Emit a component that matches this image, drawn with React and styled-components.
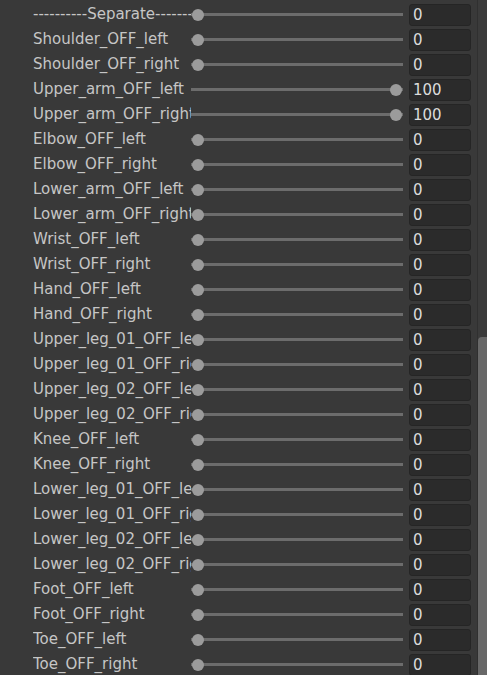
import React from 'react';
import styled, { createGlobalStyle } from 'styled-components';

const GlobalStyle = createGlobalStyle`
  html, body {
    margin: 0;
    padding: 0;
    background: #393939;
    overflow: hidden;
  }
`;

const Panel = styled.div`
  display: flex;
  width: 487px;
  height: 675px;
  overflow: hidden;
  background: #393939;
  font-family: "DejaVu Sans", Verdana, sans-serif;
`;

const List = styled.div`
  flex: 1;
  display: flex;
  flex-direction: column;
  padding-top: 2px;
  padding-right: 6px;
`;

const Row = styled.div`
  display: flex;
  align-items: center;
  height: 25px;
  flex-shrink: 0;
  padding-left: 33px;
`;

const Label = styled.div`
  width: 158px;
  flex-shrink: 0;
  overflow: hidden;
  white-space: nowrap;
  color: #c6c6c6;
  font-size: 15px;
  line-height: 25px;
`;

const Slider = styled.div`
  position: relative;
  width: 212px;
  height: 3px;
  background: #6c6c6c;
  flex-shrink: 0;
`;

const Knob = styled.div`
  position: absolute;
  top: 50%;
  width: 12px;
  height: 12px;
  margin-left: -6px;
  margin-top: -6px;
  border-radius: 50%;
  background: #9b9b9b;
`;

const NumberBox = styled.div`
  margin-left: 6px;
  width: 57px;
  height: 20px;
  box-sizing: content-box;
  border: 1px solid #252525;
  border-radius: 3px;
  background: #2b2b2b;
  color: #dcdcdc;
  font-size: 15px;
  line-height: 21px;
  padding-left: 3px;
`;

const Scrollbar = styled.div`
  position: relative;
  width: 10px;
  flex-shrink: 0;
  border-left: 1px solid #303030;
  background: #3b3b3b;
`;

const Thumb = styled.div`
  position: absolute;
  left: 0;
  right: 0;
  top: 337px;
  bottom: 0;
  border-radius: 4px 0 0 0;
  background: #686868;
`;

const rows = [
  ['----------Separate----------', 0],
  ['Shoulder_OFF_left', 0],
  ['Shoulder_OFF_right', 0],
  ['Upper_arm_OFF_left', 100],
  ['Upper_arm_OFF_right', 100],
  ['Elbow_OFF_left', 0],
  ['Elbow_OFF_right', 0],
  ['Lower_arm_OFF_left', 0],
  ['Lower_arm_OFF_right', 0],
  ['Wrist_OFF_left', 0],
  ['Wrist_OFF_right', 0],
  ['Hand_OFF_left', 0],
  ['Hand_OFF_right', 0],
  ['Upper_leg_01_OFF_left', 0],
  ['Upper_leg_01_OFF_right', 0],
  ['Upper_leg_02_OFF_left', 0],
  ['Upper_leg_02_OFF_right', 0],
  ['Knee_OFF_left', 0],
  ['Knee_OFF_right', 0],
  ['Lower_leg_01_OFF_left', 0],
  ['Lower_leg_01_OFF_right', 0],
  ['Lower_leg_02_OFF_left', 0],
  ['Lower_leg_02_OFF_right', 0],
  ['Foot_OFF_left', 0],
  ['Foot_OFF_right', 0],
  ['Toe_OFF_left', 0],
  ['Toe_OFF_right', 0],
];

// knob travels from 7px to 205px along the track
const knobLeft = (v) => 7 + (v / 100) * 198;

export default function App() {
  return (
    <>
      <GlobalStyle />
      <Panel>
        <List>
          {rows.map(([name, value]) => (
            <Row key={name}>
              <Label>{name}</Label>
              <Slider>
                <Knob style={{ left: knobLeft(value) }} />
              </Slider>
              <NumberBox>{value}</NumberBox>
            </Row>
          ))}
        </List>
        <Scrollbar>
          <Thumb />
        </Scrollbar>
      </Panel>
    </>
  );
}
